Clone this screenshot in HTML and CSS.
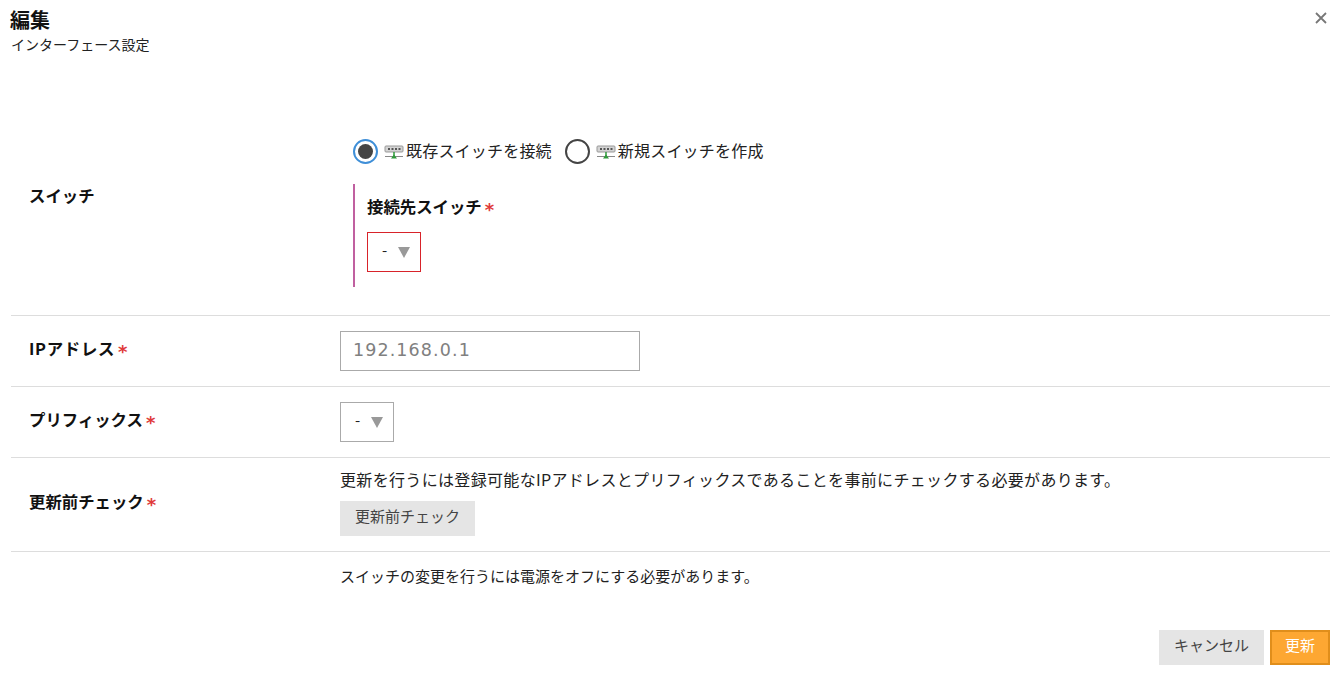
FILE: index.html
```html
<!DOCTYPE html>
<html lang="ja">
<head>
    <meta charset="UTF-8">
    <title>編集</title>
    <link rel="stylesheet" href="styles.css">
</head>
<body>
    <div class="dialog">
        <header class="head">
            <div>
                <h1 class="title">編集</h1>
                <p class="subtitle">インターフェース設定</p>
            </div>
            <svg class="close" width="12" height="12" viewBox="0 0 12 12"><path d="M1 1L11 11M11 1L1 11" stroke="#777" stroke-width="1.8" fill="none"/></svg>
        </header>

        <main class="form">
            <div class="row row-switch">
                <div class="label">スイッチ</div>
                <div class="value switch-value">
                    <div class="radios">
                        <label class="radio-item">
                            <span class="radio checked"></span>
                            <svg class="sw-icon" width="20" height="16" viewBox="0 0 20 16"><rect x="1" y="3" width="18" height="6" rx="1" fill="#d4d4d4" stroke="#999"/><path d="M4 6h2M7.500 6h2M11 6h2M14.500 6h2" stroke="#555" stroke-width="2"/><path d="M1 13.500h18" stroke="#888"/><path d="M10 9v4" stroke="#2f9a3a" stroke-width="1.500"/><path d="M7 15.500h6L10 11.500z" fill="#2f9a3a"/></svg>
                            <span class="radio-text">既存スイッチを接続</span>
                        </label>
                        <label class="radio-item">
                            <span class="radio"></span>
                            <svg class="sw-icon" width="20" height="16" viewBox="0 0 20 16"><rect x="1" y="3" width="18" height="6" rx="1" fill="#d4d4d4" stroke="#999"/><path d="M4 6h2M7.500 6h2M11 6h2M14.500 6h2" stroke="#555" stroke-width="2"/><path d="M1 13.500h18" stroke="#888"/><path d="M10 9v4" stroke="#2f9a3a" stroke-width="1.500"/><path d="M7 15.500h6L10 11.500z" fill="#2f9a3a"/></svg>
                            <span class="radio-text">新規スイッチを作成</span>
                        </label>
                    </div>
                    <div class="sub-block">
                        <div class="sub-label">接続先スイッチ<span class="req">*</span></div>
                        <div class="select error">
                            <span class="dash">-</span><i class="arrow"></i>
                        </div>
                    </div>
                </div>
            </div>

            <div class="row row-ip">
                <div class="label">IPアドレス<span class="req">*</span></div>
                <div class="value">
                    <input class="text-input" type="text" placeholder="192.168.0.1">
                </div>
            </div>

            <div class="row row-prefix">
                <div class="label">プリフィックス<span class="req">*</span></div>
                <div class="value">
                    <div class="select">
                        <span class="dash">-</span><i class="arrow"></i>
                    </div>
                </div>
            </div>

            <div class="row row-check">
                <div class="label">更新前チェック<span class="req">*</span></div>
                <div class="value check-value">
                    <p class="note note-large">更新を行うには登録可能なIPアドレスとプリフィックスであることを事前にチェックする必要があります。</p>
                    <button class="btn btn-gray" type="button">更新前チェック</button>
                </div>
            </div>

            <div class="row row-note">
                <div class="label"></div>
                <div class="value note-value">
                    <p class="note">スイッチの変更を行うには電源をオフにする必要があります。</p>
                </div>
            </div>
        </main>

        <footer class="foot">
            <button class="btn btn-gray btn-cancel" type="button">キャンセル</button>
            <button class="btn btn-primary" type="button">更新</button>
        </footer>
    </div>
</body>
</html>
```

FILE: styles.css
```css
/* base */
* {
    box-sizing: border-box;
}

body {
    margin: 0;
    background-color: #fff;
    color: #222;
    font-family: "Noto Sans CJK JP", "Noto Sans", sans-serif;
    font-size: 14px;
}

.dialog {
    height: 675px;
    padding: 0 7px 0 11px;
    overflow: hidden;
}

/* header */
.head {
    display: flex;
    justify-content: space-between;
    align-items: flex-start;
    height: 130px;
    padding-top: 6px;
}

.title {
    margin: 0 0 0 -1px;
    font-size: 20px;
    line-height: 28px;
    font-weight: 700;
    color: #111;
}

.subtitle {
    margin: 0;
    font-size: 14px;
    line-height: 20px;
}

.close {
    margin: 6px 3px 0 0;
}

/* rows */
.row {
    display: flex;
    align-items: center;
    border-bottom: 1px solid #ddd;
}

.row:last-child {
    border-bottom: none;
}

.label {
    width: 329px;
    flex-shrink: 0;
    padding: 0 0 7px 18px;
    font-size: 16.4px;
    line-height: 24px;
    font-weight: 700;
    color: #111;
}

.row-switch {
    height: 186px;
    padding-bottom: 48px;
}

.row-ip,
.row-prefix {
    height: 71px;
}

.row-ip .label {
    letter-spacing: 0.7px;
}

.row-check {
    height: 94px;
}

.row-note {
    height: 50px;
}

.req {
    margin-left: 3px;
    color: #e03a3a;
    font-family: "DejaVu Sans", sans-serif;
    font-size: 18px;
    line-height: 0;
    font-weight: 700;
    letter-spacing: 0;
    vertical-align: -3px;
}

.switch-value {
    margin-top: 28px;
}

/* radios */
.radios {
    display: flex;
    gap: 13px;
    padding-left: 13px;
    font-size: 16px;
    line-height: 24px;
    letter-spacing: 0.2px;
}

.radio-item {
    display: flex;
    align-items: center;
}

.radio-text {
    padding-bottom: 2px;
}

.radio {
    display: flex;
    align-items: center;
    justify-content: center;
    width: 25px;
    height: 25px;
    margin-right: 6px;
    border: 2px solid #444;
    border-radius: 50%;
}

.radio.checked {
    border-color: #3f8fd8;
}

.radio.checked::after {
    content: "";
    width: 15px;
    height: 15px;
    border-radius: 50%;
    background-color: #444;
}

.sw-icon {
    margin-right: 2px;
}

.sub-block {
    margin: 20px 0 0 13px;
    padding: 10px 0 15px 12px;
    border-left: 2px solid #c060a0;
}

.sub-label {
    font-size: 16.4px;
    line-height: 24px;
    font-weight: 700;
    color: #111;
}

/* inputs */
.select {
    display: flex;
    align-items: center;
    gap: 11px;
    width: 54px;
    height: 40px;
    padding-left: 14px;
    border: 1px solid #aaa;
    font-size: 15px;
}

.dash {
    padding-bottom: 5px;
}

.sub-block .select {
    margin-top: 14px;
}

.select.error {
    border-color: #d8232a;
}

.arrow {
    width: 0;
    height: 0;
    border-left: 6px solid transparent;
    border-right: 6px solid transparent;
    border-top: 11px solid #999;
}

.text-input {
    display: block;
    width: 300px;
    height: 40px;
    padding: 0 12px 2px;
    border: 1px solid #aaa;
    border-radius: 0;
    font-family: "DejaVu Sans", sans-serif;
    font-size: 17.5px;
    letter-spacing: 1.1px;
}

.text-input::placeholder {
    color: #808080;
    opacity: 1;
}

.note {
    margin: 0;
    font-size: 15px;
    line-height: 22px;
}

.note-large {
    font-size: 16px;
    letter-spacing: 0.33px;
}

.check-value {
    padding-bottom: 5px;
}

.note-value {
    padding-bottom: 2px;
}

/* buttons */
.btn {
    border: none;
    border-radius: 0;
    font-family: inherit;
    font-size: 15px;
    cursor: pointer;
}

.btn-gray {
    height: 35px;
    padding: 0 15px 6px;
    background-color: #e5e5e5;
    color: #444;
}

.row-check .btn {
    margin-top: 11px;
}

.foot {
    display: flex;
    justify-content: flex-end;
    gap: 6px;
    margin-top: 28px;
}

.btn-cancel {
    width: 105px;
    padding: 0 0 6px;
}

.btn-primary {
    width: 60px;
    height: 35px;
    padding: 0 0 6px;
    background-color: #fda732;
    border: 2px solid #e08e1b;
    color: #fff;
}
```
